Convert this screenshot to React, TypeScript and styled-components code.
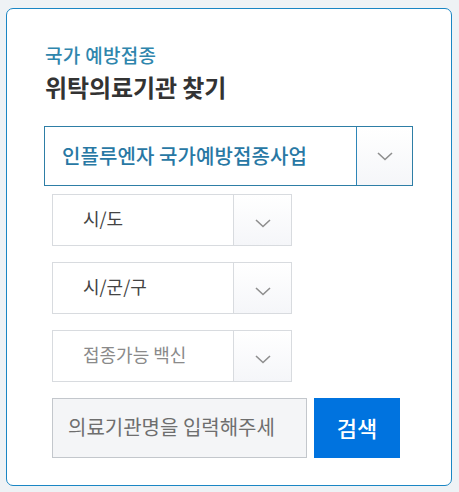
import styled, { createGlobalStyle } from "styled-components"

const GlobalStyle = createGlobalStyle`
  html, body {
    margin: 0;
    padding: 0;
    background: #eef2f5;
  }
  body {
    font-family: "Noto Sans CJK KR", "Noto Sans", sans-serif;
  }
  * {
    box-sizing: border-box;
  }
`

const Card = styled.div`
  margin: 8px 7px 6px 6px;
  height: 478px;
  background: #fff;
  border: 1px solid #1a86c4;
  border-radius: 7px;
  padding: 32px 38px 0 37px;
`

const Eyebrow = styled.div`
  font-size: 19px;
  font-weight: 500;
  line-height: 28px;
  color: #2f86ad;
  letter-spacing: 0.3px;
  padding-left: 1px;
`

const Title = styled.h2`
  margin: 0;
  font-size: 24px;
  font-weight: 700;
  line-height: 35px;
  color: #333;
  letter-spacing: -0.1px;
  padding-left: 1px;
`

const Fields = styled.div`
  margin-top: 22px;
  display: flex;
  flex-direction: column;
`

const SelectBox = styled.div<{ $main?: boolean }>`
  display: flex;
  width: ${(p) => (p.$main ? "369px" : "240px")};
  height: ${(p) => (p.$main ? "60px" : "52px")};
  margin-left: ${(p) => (p.$main ? "0" : "8px")};
  margin-bottom: ${(p) => (p.$main ? "8px" : "16px")};
  border: 1px solid ${(p) => (p.$main ? "#2e7ea6" : "#d8dbdf")};
  background: #fff;
  cursor: pointer;
`

const SelectLabel = styled.div<{ $main?: boolean; $disabled?: boolean }>`
  flex: 1;
  display: flex;
  align-items: center;
  padding-left: ${(p) => (p.$main ? "17px" : "30px")};
  font-size: ${(p) => (p.$main ? "20px" : "18px")};
  font-weight: ${(p) => (p.$main ? 500 : 400)};
  letter-spacing: ${(p) => (p.$main ? "0.1px" : "0")};
  color: ${(p) => (p.$main ? "#2878a4" : p.$disabled ? "#8a8a8a" : "#444")};
  white-space: nowrap;
  padding-bottom: ${(p) => (p.$main ? "2px" : "4px")};
`

const ArrowCell = styled.div<{ $main?: boolean }>`
  width: ${(p) => (p.$main ? "56px" : "58px")};
  display: flex;
  align-items: center;
  justify-content: center;
  border-left: 1px solid ${(p) => (p.$main ? "#2e86b8" : "#d8dbdf")};
  background: linear-gradient(#fff, #f5f6f9);
  padding-top: ${(p) => (p.$main ? "0" : "6px")};
`

const SearchRow = styled.div`
  display: flex;
  gap: 7px;
  margin-left: 8px;
`

const SearchInput = styled.input`
  width: 255px;
  height: 60px;
  border: 1px solid #c3c7cc;
  background: #f4f5f7;
  padding: 0 0 3px 15px;
  font-family: inherit;
  font-size: 20px;
  letter-spacing: 0;
  color: #333;
  outline: none;
  &::placeholder {
    color: #6e6e6e;
  }
`

const SearchButton = styled.button`
  width: 86px;
  height: 60px;
  border: none;
  background: #0073df;
  color: #fff;
  font-family: inherit;
  font-size: 22px;
  font-weight: 500;
  padding-bottom: 3px;
  cursor: pointer;
`

const Chevron = () => (
  <svg width="16" height="9" viewBox="0 0 16 9">
    <polyline
      points="1,1 8,7.5 15,1"
      fill="none"
      stroke="#8e8e8e"
      strokeWidth="1.6"
    />
  </svg>
)

const Select = ({
  label,
  main,
  disabled,
}: {
  label: string
  main?: boolean
  disabled?: boolean
}) => (
  <SelectBox $main={main}>
    <SelectLabel $main={main} $disabled={disabled}>
      {label}
    </SelectLabel>
    <ArrowCell $main={main}>
      <Chevron />
    </ArrowCell>
  </SelectBox>
)

const App = () => {
  return (
    <>
      <GlobalStyle />
      <Card>
        <Eyebrow>국가 예방접종</Eyebrow>
        <Title>위탁의료기관 찾기</Title>
        <Fields>
          <Select main label="인플루엔자 국가예방접종사업" />
          <Select label="시/도" />
          <Select label="시/군/구" />
          <Select disabled label="접종가능 백신" />
          <SearchRow>
            <SearchInput placeholder="의료기관명을 입력해주세" />
            <SearchButton>검색</SearchButton>
          </SearchRow>
        </Fields>
      </Card>
    </>
  )
}

export default App
